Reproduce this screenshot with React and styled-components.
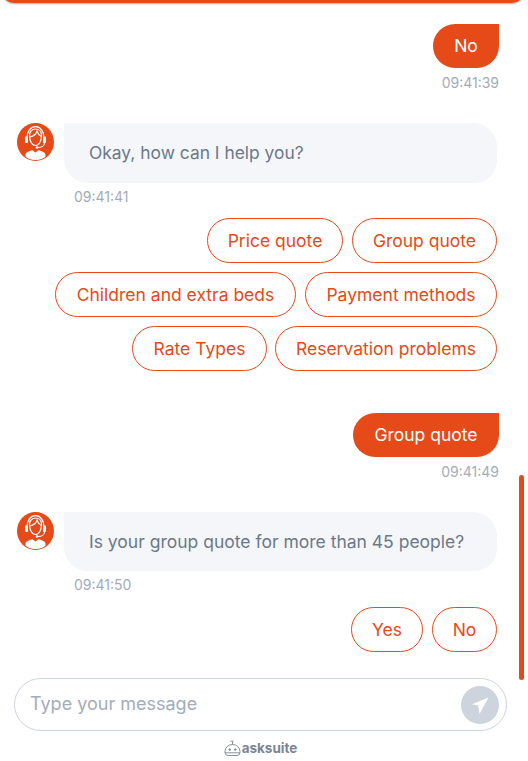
import React from "react";
import styled, { createGlobalStyle } from "styled-components";

const Global = createGlobalStyle`
  html, body { margin: 0; padding: 0; background: #fff; }
  body { font-family: Inter, "Liberation Sans", sans-serif; }
`;
const ORANGE = "#e64a19";
const SLATE = "#6b7988";

const Page = styled.div`
  position: relative;
  width: 528px;
  height: 761px;
  overflow: hidden;
  display: flex;
  flex-direction: column;
`;
const TopBar = styled.div`
  height: 15px;
  margin: -12px 4px 0 2px;
  background: ${ORANGE};
  border-radius: 0 0 12px 12px;
  box-shadow: 0 1px 2px rgba(0,0,0,.3);
  flex: none;
`;
const Feed = styled.div`
  height: 675px;
  flex: none;
  display: flex;
  flex-direction: column;
  padding: 21px 29px 0 17px;
  box-sizing: border-box;
`;
const UserBlock = styled.div`
  display: flex;
  flex-direction: column;
  align-items: flex-end;
  margin-bottom: ${p => p.$mb}px;
`;
const UserBubble = styled.div`
  width: ${p => p.$w}px;
  height: 44px;
  padding-bottom: 2px;
  box-sizing: border-box;
  display: flex;
  align-items: center;
  justify-content: center;
  background: ${ORANGE};
  color: #fff;
  font-size: 17.5px;
  border-radius: 22px 0 22px 22px;
`;
const Time = styled.div`
  font-size: 14px;
  line-height: 17px;
  color: #a3acba;
  margin-top: 6px;
`;
const BotRow = styled.div`
  display: flex;
  gap: 10px;
  align-items: flex-start;
`;
const Avatar = styled.svg`
  width: 37px;
  height: 38px;
  flex: none;
`;
const BotBubble = styled.div`
  flex: 1;
  box-sizing: border-box;
  background: #f5f6fa;
  color: ${SLATE};
  font-size: ${p => p.$fs}px;
  border-radius: 0 24px 22px 24px;
  padding: 0 25px ${p => p.$pb}px;
  height: ${p => p.$h}px;
  display: flex;
  align-items: center;
  margin-right: 2px;
`;
const BotTime = styled(Time)`
  margin: 5px 0 0 57px;
`;
const Chips = styled.div`
  display: flex;
  flex-direction: column;
  align-items: flex-end;
  gap: 9px;
  margin-top: ${p => p.$mt}px;
  margin-right: 2px;
  margin-bottom: ${p => p.$mb}px;
`;
const ChipRow = styled.div`
  display: flex;
  gap: ${p => p.$gap ?? 9}px;
`;
const Chip = styled.div`
  width: ${p => p.$w}px;
  height: 45px;
  box-sizing: border-box;
  display: flex;
  align-items: center;
  justify-content: center;
  border: 1px solid ${ORANGE};
  border-radius: 23px;
  color: ${ORANGE};
  font-size: 17.5px;
  background: #fff;
`;
const InputBar = styled.div`
  height: 53px;
  margin: 0 21px 0 14px;
  box-sizing: border-box;
  border: 1px solid #cdd4dd;
  border-radius: 27px;
  display: flex;
  align-items: center;
  justify-content: space-between;
  padding: 0 7px 0 15px;
  flex: none;
`;
const Placeholder = styled.div`
  font-size: 18px;
  color: #a3acba;
  margin-bottom: 2px;
`;
const Send = styled.div`
  width: 38px;
  height: 38px;
  border-radius: 50%;
  background: #cdd4dd;
  display: flex;
  align-items: center;
  justify-content: center;
`;
const Brand = styled.div`
  display: flex;
  justify-content: center;
  align-items: center;
  gap: 1px;
  margin: 8px 7px 0 0;
  color: #7a8593;
  font-size: 13.5px;
  font-weight: 700;
  line-height: 18px;
`;
const Scrollbar = styled.div`
  position: absolute;
  left: 519px;
  top: 475px;
  width: 5px;
  height: 205px;
  border-radius: 3px;
  background: ${ORANGE};
`;

const Agent = () => (
  <Avatar viewBox="0 0 37 38">
    <defs>
      <clipPath id="agent-disc"><ellipse cx="18.5" cy="19" rx="17.5" ry="18" /></clipPath>
    </defs>
    <ellipse cx="18.5" cy="19" rx="18.5" ry="19" fill={ORANGE} />
    <g clipPath="url(#agent-disc)">
      <path d="M8.500 38v-6.500c0-2 3.500-3.600 7-4.300l3 2.300 3-2.300c3.500.7 7 2.300 7 4.300V38z" fill="#fff" />
    </g>
    <path d="M12.500 12.500C12.500 8.500 15 6 18.500 6s6 2.500 6 6.500c0 5.500-2.500 10-6 10s-6-4.500-6-10z" fill="none" stroke="#fff" strokeWidth="1.200" />
    <path d="M12.800 14c3.800-.8 6.400-3 7.200-6 .8 2.500 2.200 4.500 4.300 5.600" fill="none" stroke="#fff" strokeWidth="1.100" />
    <path d="M10 15C10 8.500 13.500 3.700 18.500 3.700S27 8.500 27 15" fill="none" stroke="#fff" strokeWidth="1.300" />
    <rect x="8" y="13.500" width="3" height="6.500" rx="1" fill="#fff" />
    <rect x="26" y="13.500" width="3" height="6.500" rx="1" fill="#fff" />
    <path d="M27.500 20c0 2.800-3 4.500-6.500 4.500" fill="none" stroke="#fff" strokeWidth="1.100" />
    <circle cx="20" cy="24.500" r="1.300" fill="#fff" />
  </Avatar>
);

const Logo = () => (
  <svg width="17" height="17" viewBox="0 0 17 17" fill="none" stroke="#7a8593" strokeWidth=".9">
    <path d="M1 11.500a7.500 7 0 0 1 15 0v1a3 3 0 0 1-3 3H4a3 3 0 0 1-3-3z" />
    <path d="M8.500 4.500V1.500M6.500 1.200h3" />
    <path d="M1 12.800h15" />
    <circle cx="5.800" cy="9.600" r=".8" fill="#7a8593" />
    <circle cx="11.200" cy="9.600" r=".8" fill="#7a8593" />
  </svg>
);

export default function App() {
  return (
    <Page>
      <Global />
      <TopBar />
      <Feed>
        <UserBlock $mb={32}>
          <UserBubble $w={66}>No</UserBubble>
          <Time>09:41:39</Time>
        </UserBlock>
        <BotRow>
          <Agent />
          <BotBubble $h={60} $pb={2} $fs={17.4}>Okay, how can I help you?</BotBubble>
        </BotRow>
        <BotTime>09:41:41</BotTime>
        <Chips $mt={13} $mb={42}>
          <ChipRow><Chip $w={136}>Price quote</Chip><Chip $w={145}>Group quote</Chip></ChipRow>
          <ChipRow><Chip $w={241}>Children and extra beds</Chip><Chip $w={192}>Payment methods</Chip></ChipRow>
          <ChipRow $gap={8}><Chip $w={135}>Rate Types</Chip><Chip $w={222}>Reservation problems</Chip></ChipRow>
        </Chips>
        <UserBlock $mb={32}>
          <UserBubble $w={146}>Group quote</UserBubble>
          <Time>09:41:49</Time>
        </UserBlock>
        <BotRow>
          <Agent />
          <BotBubble $h={59} $pb={0} $fs={17.5}>Is your group quote for more than 45 people?</BotBubble>
        </BotRow>
        <BotTime>09:41:50</BotTime>
        <Chips $mt={14} $mb={0}>
          <ChipRow><Chip $w={72}>Yes</Chip><Chip $w={65}>No</Chip></ChipRow>
        </Chips>
      </Feed>
      <InputBar>
        <Placeholder>Type your message</Placeholder>
        <Send>
          <svg width="20" height="20" viewBox="0 0 20 20">
            <path d="M18.500 2.500 2 9.200l6 1.300 1.500 8.500z" fill="#fff" />
          </svg>
        </Send>
      </InputBar>
      <Brand><Logo />asksuite</Brand>
      <Scrollbar />
    </Page>
  );
}
